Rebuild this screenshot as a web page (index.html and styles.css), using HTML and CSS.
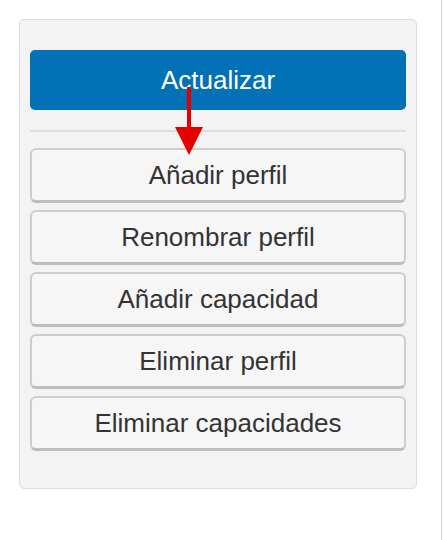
FILE: index.html
```html
<!DOCTYPE html>
<html lang="es">
  <head>
    <meta charset="UTF-8" />
    <meta name="viewport" content="width=device-width, initial-scale=1.0" />
    <title>Perfiles</title>
    <link rel="stylesheet" href="styles.css">
  </head>
  <body>
    <div class="page">
      <div class="panel">
        <button type="button" class="btn-primary">Actualizar</button>
        <hr class="divider" />
        <div class="actions">
          <button type="button" class="btn">Añadir perfil</button>
          <button type="button" class="btn">Renombrar perfil</button>
          <button type="button" class="btn">Añadir capacidad</button>
          <button type="button" class="btn">Eliminar perfil</button>
          <button type="button" class="btn">Eliminar capacidades</button>
        </div>

        <!-- callout arrow pointing at the first action -->
        <svg class="arrow" width="30" height="70" viewBox="0 0 30 70">
          <rect x="13" y="0" width="4" height="44" fill="#e50000" />
          <polygon points="1,40 29,40 15,68" fill="#e50000" />
        </svg>
      </div>
    </div>
  </body>
</html>
```

FILE: styles.css
```css
body {
  margin: 0;
  padding: 0;
  font-family: "Liberation Sans", Arial, sans-serif;
  background: #fff;
}
.page {
  width: 442px;
  min-height: 100vh;
  box-sizing: border-box;
  border-right: 1px solid #d6d6d6;
  padding: 19px 0 0 19px;
}
.panel {
  position: relative;
  width: 398px;
  height: 470px;
  box-sizing: border-box;
  background-color: #f3f3f4;
  border: 1px solid #dcdcdc;
  border-radius: 5px;
  padding: 30px 10px 0 10px;
}
.btn-primary {
  display: block;
  width: 100%;
  height: 60px;
  border: none;
  border-radius: 5px;
  background-color: #0271b5;
  color: #fff;
  font-family: inherit;
  font-size: 26px;
  padding: 0;
  cursor: pointer;
}
.divider {
  border: none;
  border-top: 2px solid #dedede;
  margin: 20px 0 16px 0;
}
.actions {
  display: flex;
  flex-direction: column;
  gap: 7px;
}
.btn {
  display: block;
  width: 100%;
  height: 55px;
  box-sizing: border-box;
  background-color: #f6f6f7;
  border: 2px solid #cdcdcd;
  border-bottom-width: 3px;
  border-bottom-color: #bdbdbd;
  border-radius: 6px;
  color: #333;
  font-family: inherit;
  font-size: 26px;
  padding: 0;
  cursor: pointer;
}
.arrow {
  position: absolute;
  left: 154px;
  top: 67px;
}
```
